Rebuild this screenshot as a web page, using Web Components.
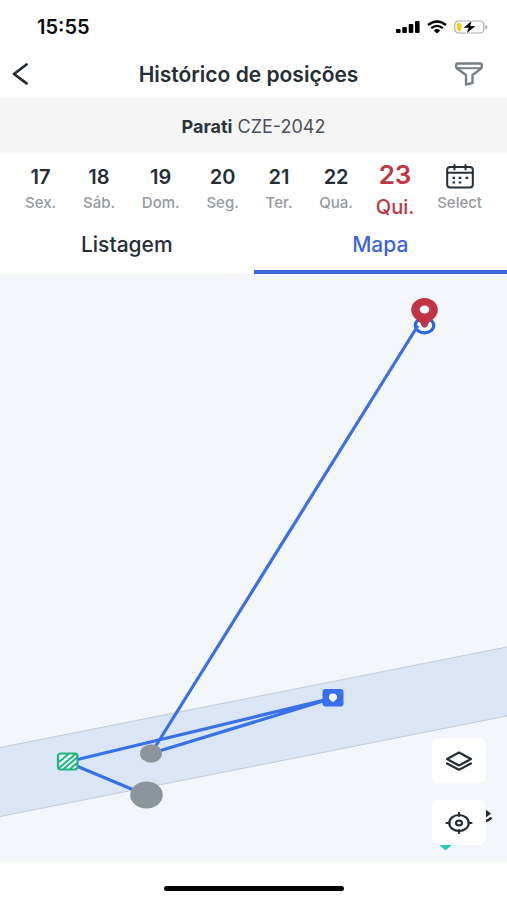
<!DOCTYPE html>
<html lang="pt-BR">
<head>
<meta charset="utf-8">
<meta name="viewport" content="width=device-width, initial-scale=1">
<title>Histórico de posições</title>
<style>
html, body { height: 100%; margin: 0; }
body { font-family: Inter, "Liberation Sans", sans-serif; background: #fff; color: #262e35; }
</style>
</head>
<body>
<history-screen></history-screen>
<script>
const RESET = `
*, *::before, *::after { box-sizing: border-box; }
button { font: inherit; color: inherit; background: none; border: 0; padding: 0; margin: 0; cursor: pointer; }
svg { display: block; }`;

function define(name, css, html) {
  customElements.define(name, class extends HTMLElement {
    connectedCallback() {
      if (this.shadowRoot) return;
      const t = document.createElement('template');
      t.innerHTML = `<style>${RESET}${css}</style>${html}`;
      this.attachShadow({ mode: 'open' }).append(t.content.cloneNode(true));
    }
  });
}

define('status-bar', `
:host { display: flex; justify-content: space-between; align-items: center; height: 52px; padding: 2px 19px 0 37px; color: #0a0a0a; font-size: 20px; font-weight: 600; line-height: 24px; }
.icons { display: flex; align-items: center; gap: 7px; }`, `
<span>15:55</span>
<span class="icons">
<svg width="24" height="14" viewBox="0 0 24 14"><g fill="#000"><rect x="0" y="9" width="4.6" height="4" rx="1"/><rect x="6.3" y="7" width="4.6" height="6" rx="1"/><rect x="12.7" y="4" width="4.6" height="9" rx="1"/><rect x="19" y="1" width="4.6" height="12" rx="1"/></g></svg>
<svg width="20" height="14" viewBox="0 0 20 14"><path d="M1 5Q10-2 19 5" fill="none" stroke="#000" stroke-width="2.4"/><path d="M4.2 8.2Q10 3.6 15.8 8.2" fill="none" stroke="#000" stroke-width="2.3"/><path d="M6.8 10.4Q10 7.8 13.2 10.4L10 13.4Z"/></svg>
<svg width="34" height="14" viewBox="0 0 34 14"><rect x=".8" y="1" width="29" height="12" rx="3.6" fill="#fff" stroke="#aaa" stroke-width="1.2"/><rect x="2.8" y="3" width="4.6" height="8" rx="1.8" fill="#ffc91f"/><path d="M31.3 5v4.4Q33.4 8.8 33.4 7.2T31.3 5Z" fill="#aaa"/><path d="M17.5 1 9.7 7.7h5l-2 5.6 8.7-7.2h-5.2Z" fill="#000" stroke="#fff" stroke-width="1.4" paint-order="stroke"/></svg>
</span>`);

define('page-header', `
:host { display: grid; grid-template-columns: 40px 1fr 40px; align-items: center; height: 46px; padding: 0 18px 0 8px; }
h1 { margin: 0 -14px 0 0; padding-right: 14px; text-align: center; font-size: 21px; font-weight: 600; line-height: 24px; }
button { display: flex; align-items: center; height: 40px; }
.filter { justify-content: flex-end; padding: 0 6px 2px 0; }
.back { padding: 0 0 2px 4px; }`, `
<button class="back" aria-label="Voltar"><svg width="17" height="22" viewBox="0 0 17 22"><path d="M14.5 1.5 2 11l12.5 9.3" fill="none" stroke="#252d33" stroke-width="2.8" stroke-linecap="round" stroke-linejoin="round"/></svg></button>
<h1><slot></slot></h1>
<button class="filter" aria-label="Filtrar"><svg width="28" height="24" viewBox="0 0 28 24"><path d="M2.800 1.500h22.400q1.600 0 1.600 1.500v2q0 .900-.800 1.600L17.500 13v8L11 22.600V13L2 6.600Q1.200 5.900 1.200 5V3q0-1.500 1.600-1.500Z" fill="#fff" stroke="#777f84" stroke-width="2.400" stroke-linejoin="round"/><path d="M1.800 6.200h24.500" stroke="#777f84" stroke-width="2"/></svg></button>`);

define('vehicle-band', `
:host { display: block; padding: 17px 16px 15px; text-align: center; background: #f5f5f6; color: #4a5055; font-size: 18px; line-height: 23px; }
::slotted(strong) { font-weight: 700; color: #2b343b; }`, `<slot></slot>`);

define('day-item', `
:host { display: block; }
button { display: flex; flex-direction: column; align-items: center; width: 100%; }
b { display: flex; align-items: center; height: 30px; font-size: 20px; font-weight: 600; line-height: 30px; }
small { font-size: 15px; line-height: 22px; color: #969a9d; font-weight: 500; }
:host([active]) { margin: 0 -4px; }
:host([active]) button { color: #c03542; }
:host([active]) b { font-size: 26px; line-height: 26px; height: 26px; }
:host([active]) small { font-size: 20px; line-height: 24px; margin-top: 7px; color: inherit; }`, `
<button><b><slot name="day"></slot></b><small><slot></slot></small></button>`);

define('day-strip', `
:host { display: flex; justify-content: space-between; align-items: flex-start; height: 67px; padding: 9px 25px 0; }`, `<slot></slot>`);

define('calendar-icon', `:host { display: block; }`, `
<svg width="28" height="26" viewBox="0 0 28 26"><g fill="none" stroke="#262e35" stroke-width="2" stroke-linecap="round"><rect x="1.200" y="3" width="25.600" height="20.500" rx="3"/><path d="M1.200 8.700h25.600M8.500 1v4.500M19.500 1v4.500"/></g><path d="M6.500 13.800h2.600m3.600 0h2.600m4.200 0h2.600M6.500 18.500h2.600m3.600 0h2.600" stroke="#262e35" stroke-width="2.200"/></svg>`);

define('view-tabs', `
:host { display: grid; }
button { height: 54px; padding-bottom: 1px; font-size: 21px; font-weight: 500; line-height: 24px; border-bottom: 4px solid transparent; }
[aria-selected=true] { color: #3d63dc; border-color: #4065dd; }
div { display: grid; grid-template-columns: 1fr 1fr; }`, `
<div role="tablist"><button role="tab" aria-selected="false">Listagem</button><button role="tab" aria-selected="true">Mapa</button></div>`);

define('map-button', `
:host { display: block; }
button { display: grid; place-items: center; width: 54px; height: 45px; padding-right: 1px; background: #fff; border-radius: 7px; }`, `
<button><slot></slot></button>`);

define('position-map', `
:host { display: block; position: relative; min-height: 0; background: #f3f7fb; overflow: hidden; }
.canvas { position: absolute; inset: 0; width: 100%; height: 100%; }
.tools { position: absolute; right: 21px; bottom: 17px; display: grid; gap: 17px; }`, `
<svg class="canvas" viewBox="0 274 507 588" preserveAspectRatio="xMidYMid slice" role="img" aria-label="Mapa de posições">
<path d="M-10 749.500 517 645v69L-10 818.500Z" fill="#dae5f6" stroke="#c3cbdb" stroke-width="1"/>
<g fill="none" stroke="#3870e8" stroke-width="3.200" stroke-linejoin="round">
<ellipse cx="424.500" cy="325.500" rx="9.200" ry="7.300" fill="#fff" stroke="#2f68de"/>
<path d="M418 325.500 151 753.500 333 698 67 762l80 33.500"/>
</g>
<path d="M424.500 328c-2.500-6-13.300-9.300-13.300-18a13.300 12 0 0 1 26.600 0c0 8.700-10.800 12-13.300 18Z" fill="#c23343"/>
<ellipse cx="424.500" cy="309.500" rx="4.800" ry="4" fill="#fff"/><path d="M420.500 322.500h8q-.5 5-4 5t-4-5Z" fill="#b03a64"/>
<g fill="#8c959b"><ellipse cx="151" cy="753.500" rx="11" ry="9.200"/><ellipse cx="146.500" cy="795" rx="16.300" ry="13.500"/></g>
<rect x="322.500" y="689" width="21" height="17.500" rx="3" fill="#376fee"/><path d="M333 702.500c-1.300-1.800-4-2.400-4-5.200a4 3.700 0 0 1 8 0c0 2.800-2.700 3.400-4 5.200Z" fill="#fff"/>
<rect x="58" y="753.500" width="19.500" height="16" rx="3" fill="#eefbf5"/>
<path d="m59 762 9.500-8m-9.500 14 16.500-14m-12 15 13.500-11.500m-7 11.500 7-6" stroke="#1eb47d" stroke-width="1.900"/>
<rect x="58" y="753.500" width="19.500" height="16" rx="3" fill="none" stroke="#1eb47d" stroke-width="2.200"/>
<path d="M485.500 811l3.500 2.500-3.500 3ZM484 821q4 .5 7.500-3.500" fill="none" stroke="#222a30" stroke-width="2.400"/>
<path d="M438 844h15l-7.500 6.500Z" fill="#2bcabb"/>
</svg>
<div class="tools">
<map-button><svg role="img" aria-label="Camadas" width="28" height="20" viewBox="0 0 28 20"><g fill="none" stroke="#262e35" stroke-width="2.200" stroke-linejoin="round" stroke-linecap="round"><path d="M14 1.500 26 8 14 14.500 2 8Z"/><path d="M2 12.500 14 18.700l12-6.200"/></g></svg></map-button>
<map-button><svg role="img" aria-label="Centralizar" width="28" height="22" viewBox="0 0 28 22"><g fill="none" stroke="#262e35" stroke-width="2.200" stroke-linecap="round"><ellipse cx="14" cy="11" rx="9.800" ry="8"/><ellipse cx="14" cy="11" rx="3" ry="2.400"/><path d="M14 1v3M14 18v3M1.500 11h3M23.500 11h3"/></g></svg></map-button>
</div>`);

define('home-bar', `
:host { display: grid; place-items: center; height: 38px; padding-top: 14px; }
i { width: 180px; height: 5px; border-radius: 3px; background: #000; }`, `<i></i>`);

define('history-screen', `
:host { display: grid; grid-template-rows: auto auto auto auto auto 1fr auto; min-height: 100%; }`, `
<status-bar></status-bar>
<page-header>Histórico de posições</page-header>
<vehicle-band><strong>Parati</strong> CZE-2042</vehicle-band>
<day-strip>
<day-item><span slot="day">17</span>Sex.</day-item>
<day-item><span slot="day">18</span>Sáb.</day-item>
<day-item><span slot="day">19</span>Dom.</day-item>
<day-item><span slot="day">20</span>Seg.</day-item>
<day-item><span slot="day">21</span>Ter.</day-item>
<day-item><span slot="day">22</span>Qua.</day-item>
<day-item active><span slot="day">23</span>Qui.</day-item>
<day-item><calendar-icon slot="day"></calendar-icon>Select</day-item>
</day-strip>
<view-tabs></view-tabs>
<position-map></position-map>
<home-bar></home-bar>`);
</script>
</body>
</html>
